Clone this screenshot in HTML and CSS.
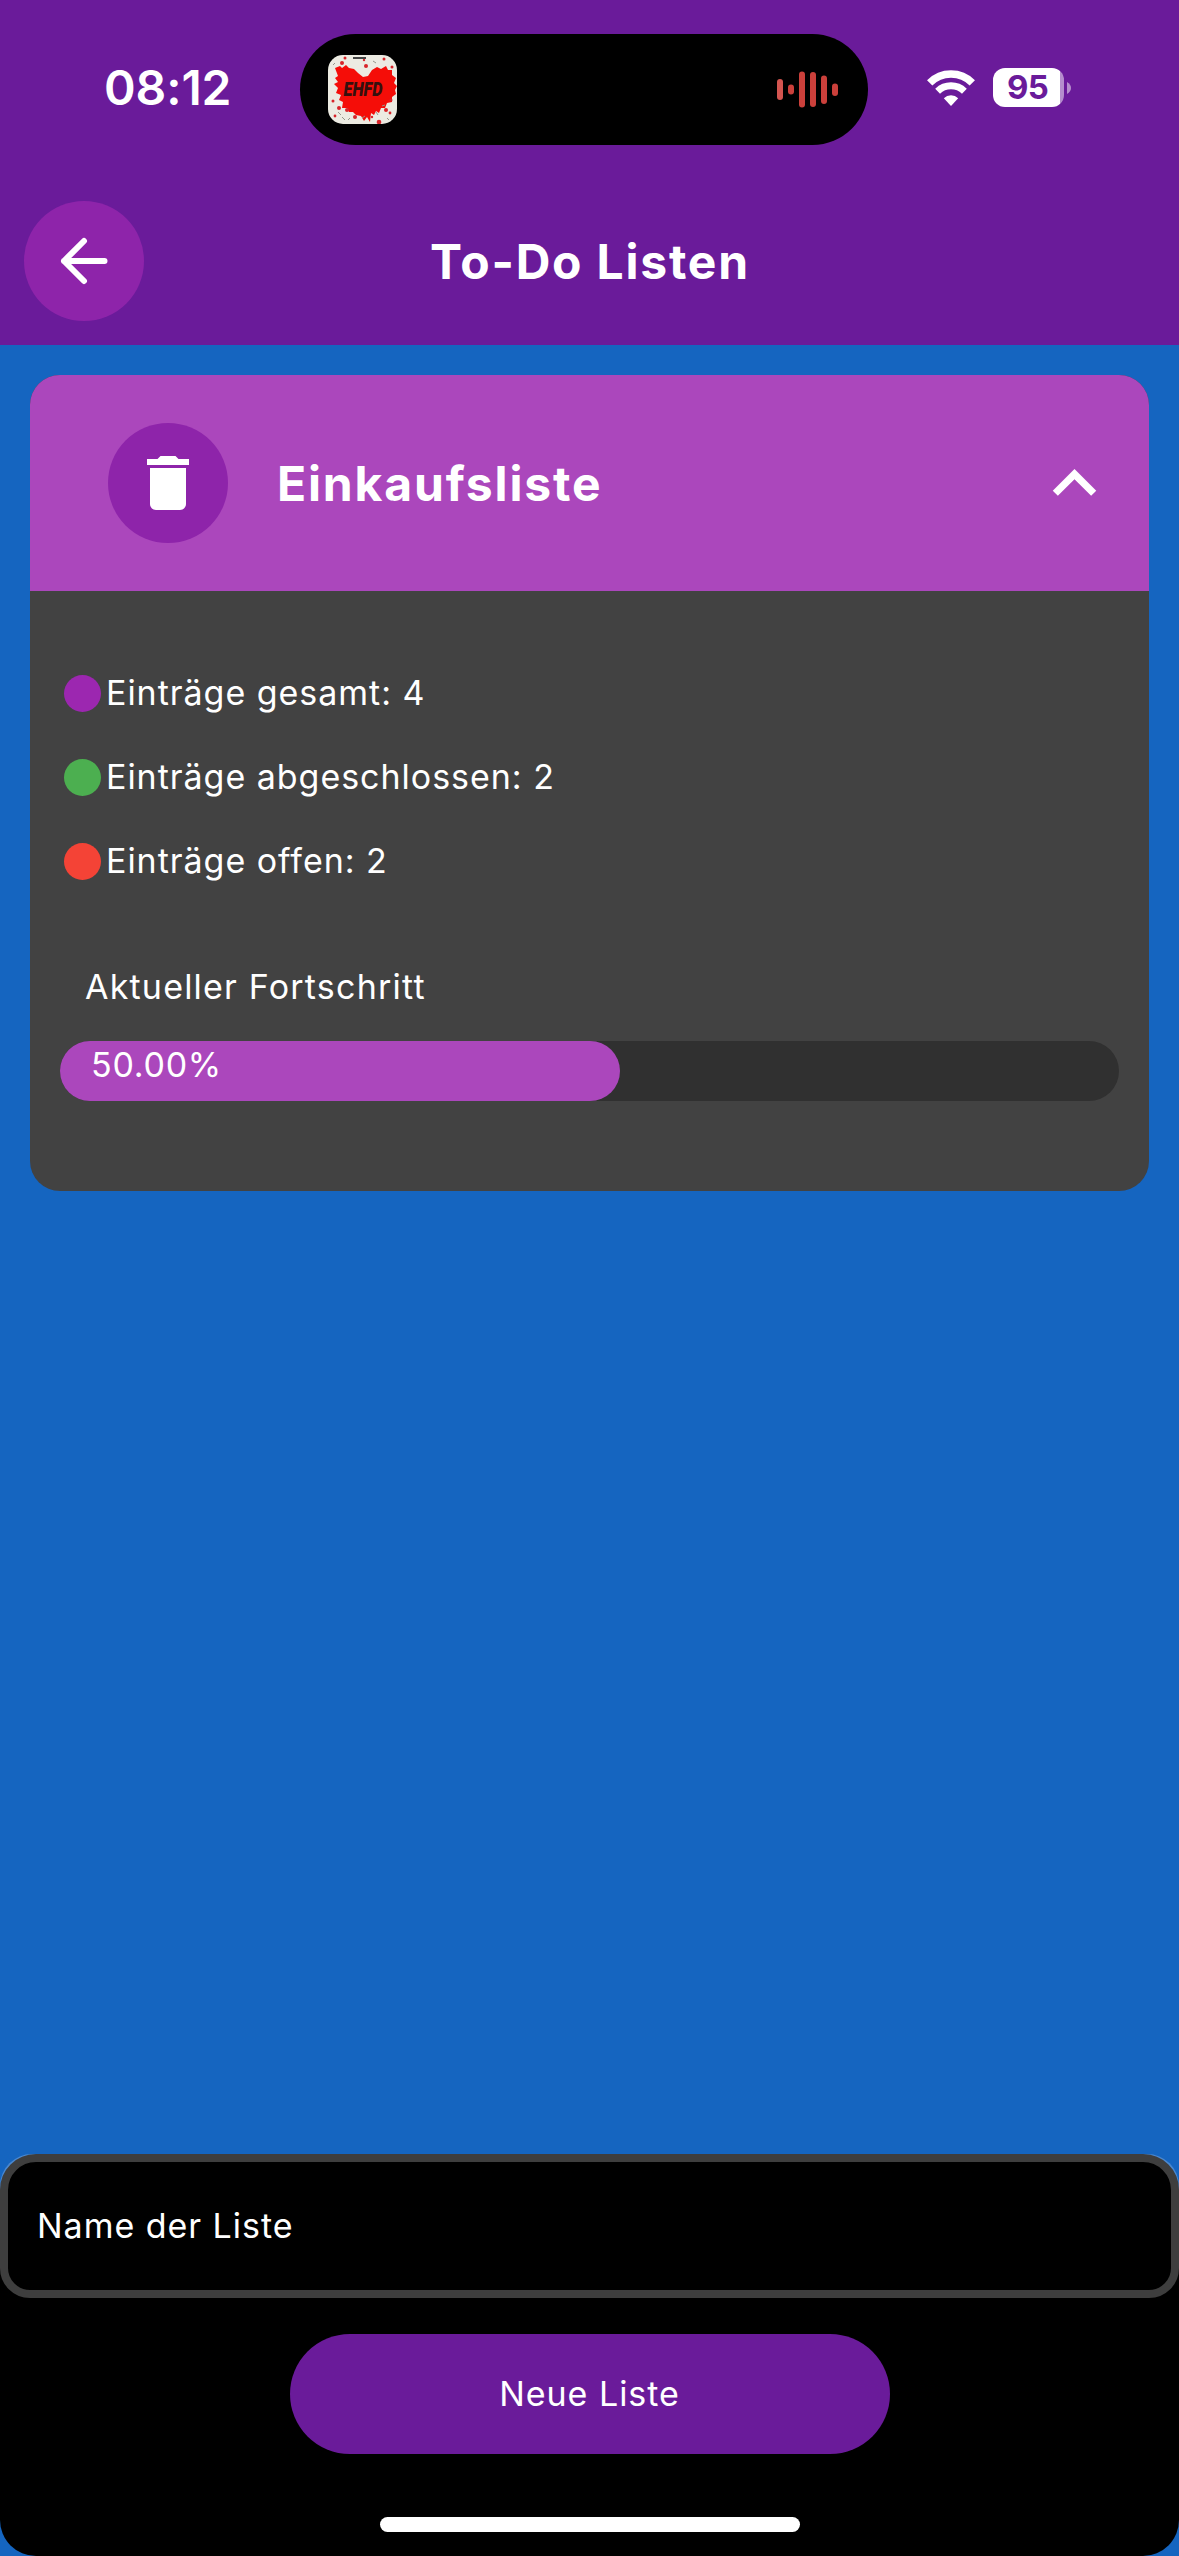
FILE: index.html
```html
<!DOCTYPE html>
<html lang="de">
<head>
<meta charset="utf-8">
<title>To-Do Listen</title>
<link rel="stylesheet" href="styles.css">
</head>
<body>
<div class="screen">
  <header class="top">
    <div class="status">
      <span class="time">08:12</span>
      <div class="island">
        <svg class="app-icon" viewBox="0 0 69 69">
          <rect width="69" height="69" rx="15" fill="#ecebe2"/>
          <path d="M7 13l5-2 2 2 4-3 3 3 5 1 4 4 5 4 5-1 4-6 5-3 4 2 5-3 2 4 4 0 0 5 4 3-2 5 3 3-2 4 1 4-4 3 0 5-5 1-2 5-4 0-2 5-3-2-2 4-3-2-1 9-3-5-3 4-3-5-5-1-3-3-4 0-2-4-5 0 1-6-4-2 2-5-5-2 2-5-4-4 4-2-3-4 3-2z" fill="#f50d08"/>
          <g fill="#d8242a"><circle cx="14" cy="8" r="2"/><circle cx="17" cy="3" r="1.500"/><circle cx="38" cy="11" r="2"/><circle cx="36" cy="5" r="1.200"/><circle cx="56" cy="4" r="1.500"/><circle cx="64" cy="12" r="1.500"/><circle cx="5" cy="46" r="1.500"/><circle cx="11" cy="53" r="2"/><circle cx="19" cy="55" r="2"/><circle cx="27" cy="62" r="2"/><circle cx="51" cy="67" r="2.300"/><circle cx="58" cy="55" r="2"/><circle cx="62" cy="58" r="1.400"/><circle cx="63" cy="45" r="1.500"/><circle cx="7" cy="61" r="1.400"/><circle cx="44" cy="62" r="1.200"/></g>
          <path d="M25 3h13" stroke="#444" stroke-width="2"/>
          <path d="M14 62l3 3M34 63l3-2M48 57l2 3M5 10l2-2M45 6l3 2M20 65l2-2M59 63l2 2M54 51l3-1M10 57l3 3" stroke="#96968c" stroke-width="1"/>
          <text x="35" y="41" class="app-label" text-anchor="middle" textLength="39" lengthAdjust="spacingAndGlyphs">EHFD</text>
        </svg>
        <svg class="wave" viewBox="0 0 62 40" fill="#cb403b">
          <rect x="0" y="10" width="6" height="21" rx="3" fill="#d45550"/><rect x="11" y="15.500" width="6" height="10" rx="3"/><rect x="22" y="2.500" width="6" height="36" rx="3"/><rect x="33" y="3" width="6" height="35" rx="3"/><rect x="44" y="6.500" width="6" height="28.500" rx="3"/><rect x="55" y="14.500" width="6" height="12.500" rx="3"/>
        </svg>
      </div>
      <svg class="wifi" viewBox="0 0 48 36" fill="none" stroke="#fff">
        <path d="M2.700 12.900A30 30 0 0 1 45.300 12.900" stroke-width="7.500"/>
        <path d="M10.600 21.200A19.500 19.500 0 0 1 37.400 21.200" stroke-width="7"/>
        <path d="M24 36l-7.200-7.800a10.500 10.500 0 0 1 14.400 0z" fill="#fff" stroke="none"/>
      </svg>
      <div class="battery"><span class="level">95</span></div>
      <svg class="battery-tip" viewBox="0 0 4 12"><path d="M0 0q4 2.500 4 6t-4 6z" fill="#b58dcd"/></svg>
    </div>
    <div class="appbar">
      <button class="round back">
        <svg viewBox="0 0 48 48" class="arrow" fill="none" stroke="#fff" stroke-width="6" stroke-linecap="round" stroke-linejoin="round"><path d="M44.500 24H4M24 4L4 24l20 20"/></svg>
      </button>
      <h1 class="title">To-Do Listen</h1>
    </div>
  </header>

  <main class="content">
    <section class="card">
      <div class="card-head">
        <button class="round delete">
          <svg class="trash" viewBox="0 0 24 24" fill="#fff"><path d="M6 19c0 1.100.9 2 2 2h8c1.100 0 2-.9 2-2V7H6v12zM19 4h-3.500l-1-1h-5l-1 1H5v2h14V4z"/></svg>
        </button>
        <h2 class="card-title">Einkaufsliste</h2>
        <svg class="chevron" viewBox="0 0 24 24" fill="#fff"><path d="M12 8l-6 6 1.410 1.410L12 10.830l4.590 4.580L18 14z"/></svg>
      </div>
      <div class="card-body">
        <ul class="stats">
          <li><i class="dot total"></i><span>Einträge gesamt: 4</span></li>
          <li><i class="dot done"></i><span>Einträge abgeschlossen: 2</span></li>
          <li><i class="dot open"></i><span>Einträge offen: 2</span></li>
        </ul>
        <p class="progress-label">Aktueller Fortschritt</p>
        <div class="bar"><div class="fill"><span class="percent">50.00%</span></div></div>
      </div>
    </section>
  </main>

  <footer class="panel">
    <div class="field"><span class="placeholder">Name der Liste</span></div>
    <button class="create"><span>Neue Liste</span></button>
    <div class="home"></div>
  </footer>
</div>
</body>
</html>
```

FILE: styles.css
```css
* { box-sizing: border-box; margin: 0; padding: 0; }
body {
  width: 1179px;
  height: 2556px;
  overflow: hidden;
  color: #fff;
  font-family: Inter, "Liberation Sans", sans-serif;
  font-size: 34px;
  letter-spacing: .97px;
}
button { border: 0; color: inherit; font: inherit; letter-spacing: inherit; }
svg { display: block; flex: none; }
.screen { display: flex; flex-direction: column; height: 2556px; background: #1565c0; }

.top { height: 345px; background: #6a1b9a; }
.status { display: flex; align-items: center; height: 177px; }
.time { width: 196px; margin: 0 0 2px 104px; font-size: 48px; line-height: 60px; font-weight: 600; letter-spacing: -.1px; }
.island {
  display: flex; align-items: center; justify-content: space-between;
  width: 568px; height: 111px; margin-top: 1px; padding: 0 29px 0 28px;
  border-radius: 56px; background: #000;
}
.app-icon { width: 69px; height: 69px; }
.app-label { font: italic 900 20px Roboto, sans-serif; letter-spacing: 0; fill: #35100e; }
.wave { width: 62px; height: 40px; }
.wifi { width: 48px; height: 36px; margin: 0 0 2px 59px; }
.battery {
  width: 71px; height: 39px; margin: 0 0 2px 18px;
  border-radius: 12px;
  background: linear-gradient(90deg, #fff 67px, #b58dcd 67px);
  color: #6a1b9a; text-align: center;
}
.level { display: block; width: 69px; font-size: 33px; line-height: 39px; font-weight: 700; letter-spacing: -.8px; }
.battery-tip { width: 4px; height: 12px; margin: 0 0 2px 3px; }
.appbar { display: flex; align-items: center; height: 168px; padding: 0 24px; }
.round { display: flex; align-items: center; justify-content: center; width: 120px; height: 120px; border-radius: 50%; background: #8e24aa; flex: none; }
.arrow { width: 48px; height: 48px; }
.title { flex: 1; padding-right: 119px; text-align: center; font-size: 48px; font-weight: 700; letter-spacing: 1.8px; }

.content { flex: 1; padding: 30px; }
.card { height: 816px; border-radius: 30px; overflow: hidden; background: #424242; }
.card-head { display: flex; align-items: center; height: 216px; padding: 0 31px 0 78px; background: #ab47bc; }
.trash { width: 72px; height: 72px; }
.card-title { flex: 1; padding-left: 49px; font-size: 48px; font-weight: 700; letter-spacing: 1.85px; }
.chevron { width: 87px; height: 87px; }
.card-body { padding: 60px 30px 0; }
.stats { list-style: none; }
.stats li { display: flex; align-items: center; gap: 5px; height: 84px; padding-left: 4px; }
.stats span, .placeholder, .create span { padding-bottom: 2px; }
.dot { width: 37px; height: 37px; border-radius: 50%; }
.total { background: #9c27b0; }
.done { background: #4caf50; }
.open { background: #f44336; }
.progress-label { padding: 63px 0 33px 25px; line-height: 42px; letter-spacing: 1.2px; }
.bar { height: 60px; border-radius: 30px; background: #303030; }
.fill { width: 560px; height: 60px; padding-left: 31px; border-radius: 30px; background: #ab47bc; line-height: 48px; }
.percent { letter-spacing: .75px; }

.panel {
  display: flex; flex-direction: column; align-items: center; height: 402px;
  border-radius: 32px 32px 36px 36px;
  background: linear-gradient(#4a88d0 40px, #000 40px);
}
.field {
  display: flex; align-items: center; width: 100%; height: 144px; padding-left: 29px;
  border: 8px solid #3e3e3e; border-radius: 36px 36px 30px 30px; background: #000;
}
.create { display: flex; align-items: center; justify-content: center; width: 600px; height: 120px; margin-top: 36px; border-radius: 60px; background: #6a1b9a; }
.home { width: 420px; height: 15px; margin-top: 63px; border-radius: 8px; background: #fff; }
```
